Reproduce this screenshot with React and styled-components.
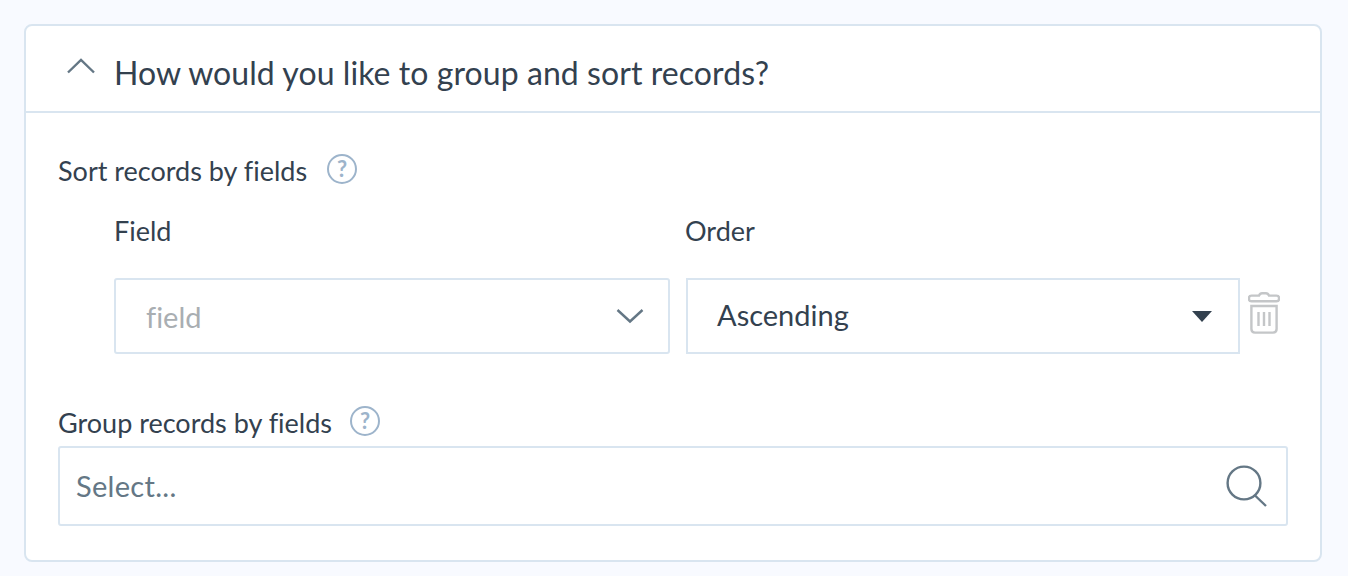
import React from 'react';
import styled, { createGlobalStyle } from 'styled-components';

const GlobalStyle = createGlobalStyle`
    html, body {
        margin: 0;
        padding: 0;
        background-color: #f8faff;
    }
    body {
        font-family: "Lato", "Noto Sans", sans-serif;
        font-variant-ligatures: none;
        color: #33414f;
    }
`;

const ChevronUp = () => (
    <svg width="30" height="16" viewBox="0 0 30 16" fill="none">
        <path d="M2 14.5 L15 2 L28 14.5" stroke="#647785" strokeWidth="2.4" />
    </svg>
);

const ChevronDown = () => (
    <svg width="28" height="16" viewBox="0 0 28 16" fill="none">
        <path d="M1.5 2 L14 13.5 L26.5 2" stroke="#647785" strokeWidth="2.4" />
    </svg>
);

const Caret = () => (
    <svg width="20" height="11" viewBox="0 0 20 11">
        <path d="M0 0 H20 L10 11 Z" fill="#33414f" />
    </svg>
);

const TrashIcon = () => (
    <svg width="32" height="42" viewBox="0 0 32 42" fill="none" stroke="#c4c6c8" strokeWidth="2.4">
        <path d="M3.5 3.6 H11 Q12 1.2 14 1.2 H18 Q20 1.2 21 3.6 H28.5 Q31 3.6 31 6 V7 Q31 9.2 28.5 9.2 H3.5 Q1 9.2 1 7 V6 Q1 3.6 3.5 3.6 Z" />
        <path d="M3.4 14 H28.6 V37 Q28.6 40.6 25 40.6 H7 Q3.4 40.6 3.4 37 Z" />
        <path d="M10.5 20 V34 M16 20 V34 M21.5 20 V34" />
    </svg>
);

const SearchIcon = () => (
    <svg width="42" height="42" viewBox="0 0 42 42" fill="none" stroke="#647785" strokeWidth="2.4">
        <circle cx="18" cy="18" r="16.4" />
        <path d="M28.5 30 L40 41" />
    </svg>
);

export default function App() {
    return (
        <>
            <GlobalStyle />
            <Page>
                <Card>
                    <CardHeader>
                        <ChevronSlot>
                            <ChevronUp />
                        </ChevronSlot>
                        <Title>How would you like to group and sort records?</Title>
                    </CardHeader>
                    <CardBody>
                        <SectionLabel>
                            Sort records by fields
                            <HelpBadge $gap={20}>?</HelpBadge>
                        </SectionLabel>
                        <Columns>
                            <ColumnLabel>Field</ColumnLabel>
                            <ColumnLabel>Order</ColumnLabel>
                        </Columns>
                        <SortRow>
                            <FieldSelect>
                                <Placeholder>field</Placeholder>
                                <ChevronDown />
                            </FieldSelect>
                            <OrderSelect>
                                <OrderValue>Ascending</OrderValue>
                                <Caret />
                            </OrderSelect>
                            <DeleteButton>
                                <TrashIcon />
                            </DeleteButton>
                        </SortRow>
                        <GroupLabel>
                            Group records by fields
                            <HelpBadge $gap={18}>?</HelpBadge>
                        </GroupLabel>
                        <SearchSelect>
                            <SearchPlaceholder>Select...</SearchPlaceholder>
                            <SearchIcon />
                        </SearchSelect>
                    </CardBody>
                </Card>
            </Page>
        </>
    );
}

// Styled Components
const Page = styled.div`
    height: 576px;
    box-sizing: border-box;
    padding: 24px 26px 0 24px;
    overflow: hidden;
`;

const Card = styled.section`
    box-sizing: border-box;
    height: 538px;
    background-color: #fff;
    border: 2px solid #d9e5f0;
    border-radius: 8px;
`;

const CardHeader = styled.header`
    display: flex;
    align-items: center;
    box-sizing: border-box;
    height: 87px;
    padding-left: 40px;
    border-bottom: 2px solid #d9e5f0;
`;

const ChevronSlot = styled.div`
    display: flex;
    width: 48px;
    margin-bottom: 5px;
`;

const Title = styled.h2`
    margin: 0;
    padding-top: 8px;
    font-size: 32px;
    font-weight: 400;
    line-height: 40px;
    letter-spacing: 0.07px;
    white-space: nowrap;
`;

const CardBody = styled.div`
    padding: 41px 32px 0;
`;

const SectionLabel = styled.div`
    display: flex;
    align-items: center;
    height: 34px;
    font-size: 27px;
    line-height: 34px;
`;

const GroupLabel = styled(SectionLabel)`
    margin-top: 52px;
`;

const HelpBadge = styled.span`
    display: flex;
    align-items: center;
    justify-content: center;
    box-sizing: border-box;
    width: 30px;
    height: 30px;
    margin: -4px 0 0 ${(props) => props.$gap}px;
    border: 2px solid #9db4cb;
    border-radius: 50%;
    color: #9db4cb;
    font-size: 22px;
    font-weight: 700;
    line-height: 1;
`;

const Columns = styled.div`
    display: grid;
    grid-template-columns: 571px 1fr;
    margin-top: 26px;
    padding-left: 56px;
`;

const ColumnLabel = styled.div`
    font-size: 27px;
    line-height: 34px;
`;

const SortRow = styled.div`
    display: flex;
    margin-top: 30px;
    padding-left: 56px;
`;

const selectBase = `
    display: flex;
    align-items: center;
    justify-content: space-between;
    box-sizing: border-box;
    height: 76px;
    background-color: #fff;
    border: 2px solid #d9e5f0;
`;

const FieldSelect = styled.div`
    ${selectBase}
    width: 556px;
    padding: 0 24px 0 30px;
    border-radius: 3px;
`;

const Placeholder = styled.span`
    color: #a9aeb2;
    font-size: 29px;
`;

const OrderSelect = styled.div`
    ${selectBase}
    width: 554px;
    margin-left: 16px;
    padding: 0 26px 0 29px;
`;

const OrderValue = styled.span`
    margin-top: -4px;
    font-size: 29px;
`;

const DeleteButton = styled.div`
    display: flex;
    margin: 14px 0 0 8px;
`;

const SearchSelect = styled.div`
    ${selectBase}
    height: 80px;
    margin-top: 6px;
    padding: 0 18px 0 16px;
    border-radius: 3px;
`;

const SearchPlaceholder = styled.span`
    margin-top: -2px;
    color: #647785;
    font-size: 29px;
    letter-spacing: 0.3px;
`;
